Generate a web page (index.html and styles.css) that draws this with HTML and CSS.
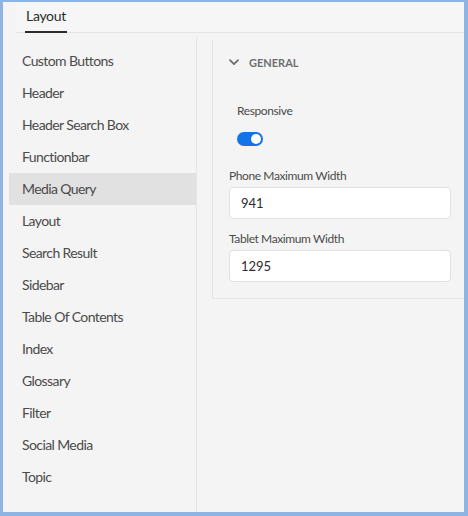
FILE: index.html
```html
<!DOCTYPE html>
<html>
<head>
<meta charset="utf-8">
<link rel="stylesheet" href="styles.css">
</head>
<body>
<div class="frame">
  <div class="tabs">
    <div class="tab active">Layout</div>
  </div>
  <div class="main">
    <ul class="sidebar">
      <li>Custom Buttons</li>
      <li>Header</li>
      <li>Header Search Box</li>
      <li>Functionbar</li>
      <li class="selected">Media Query</li>
      <li>Layout</li>
      <li>Search Result</li>
      <li>Sidebar</li>
      <li>Table Of Contents</li>
      <li>Index</li>
      <li>Glossary</li>
      <li>Filter</li>
      <li>Social Media</li>
      <li>Topic</li>
    </ul>
    <div class="content">
      <div class="card">
        <div class="section-head">
          <svg class="chev" width="10" height="7" viewBox="0 0 10 7"><path d="M1 1.2 L5 5.2 L9 1.2" fill="none" stroke="#6e6e6e" stroke-width="1.8" stroke-linecap="round" stroke-linejoin="round"/></svg>
          <span class="section-title">GENERAL</span>
        </div>
        <div class="toggle-field">
          <div class="label">Responsive</div>
          <div class="switch"><span class="knob"></span></div>
        </div>
        <div class="field">
          <div class="label">Phone Maximum Width</div>
          <div class="input">941</div>
        </div>
        <div class="field">
          <div class="label">Tablet Maximum Width</div>
          <div class="input">1295</div>
        </div>
      </div>
    </div>
  </div>
</div>
</body>
</html>
```

FILE: styles.css
```css
* { box-sizing: border-box; }
html, body { margin: 0; padding: 0; }
body {
  font-family: Lato, "Noto Sans", sans-serif;
  color: #4b4b4b;
}
.frame {
  width: 468px;
  height: 516px;
  border-style: solid;
  border-color: #8eb4e3;
  border-width: 2px 4px 4px 3px;
  background: #f4f4f4;
  display: flex;
  flex-direction: column;
  overflow: hidden;
}
.tabs {
  height: 31px;
  margin-left: 13px;
  border-bottom: 1px solid #e4e4e4;
  display: flex;
  align-items: flex-end;
  background: #f6f6f6;
}
.tab {
  margin-left: 9px;
  padding: 0 1px;
  height: 31px;
  line-height: 27px;
  font-size: 14px;
  letter-spacing: -0.3px;
  color: #2c2c2c;
  position: relative;
  top: 1px;
}
.tab.active { border-bottom: 2px solid #2c2c2c; }
.main {
  flex: 1;
  display: flex;
  margin-top: 4px;
}
.sidebar {
  list-style: none;
  margin: 0 0 0 6px;
  padding: 8px 0 0;
  width: 188px;
  border-right: 1px solid #e6e6e6;
}
.sidebar li {
  height: 32px;
  line-height: 32px;
  padding-left: 13px;
  font-size: 14px;
  letter-spacing: -0.6px;
  color: #4b4b4b;
}
.sidebar li.selected { background: #e1e1e1; }
.content {
  flex: 1;
  padding: 3px 0 0 15px;
}
.card {
  border-left: 1px solid #e6e6e6;
  border-bottom: 1px solid #e6e6e6;
  padding: 14px 13px 16px 16px;
}
.section-head {
  display: flex;
  align-items: center;
  height: 16px;
}
.chev { display: block; margin-right: 10px; }
.section-title {
  font-size: 11px;
  font-weight: 700;
  color: #6e6e6e;
}
.toggle-field {
  padding-left: 8px;
  margin-top: 33px;
}
.label {
  font-size: 12px;
  line-height: 16px;
  letter-spacing: -0.4px;
  color: #4b4b4b;
}
.switch {
  margin-top: 13px;
  width: 26px;
  height: 14px;
  border-radius: 7px;
  background: #1473e6;
  position: relative;
}
.knob {
  position: absolute;
  right: 2px;
  top: 2px;
  width: 10px;
  height: 10px;
  border-radius: 50%;
  background: #fff;
}
.field { margin-top: 12px; }
.toggle-field + .field { margin-top: 22px; }
.input {
  margin-top: 3px;
  height: 32px;
  background: #fff;
  border: 1px solid #e1e1e1;
  border-radius: 4px;
  padding-left: 11px;
  line-height: 30px;
  font-size: 13px;
  color: #2c2c2c;
}
```
